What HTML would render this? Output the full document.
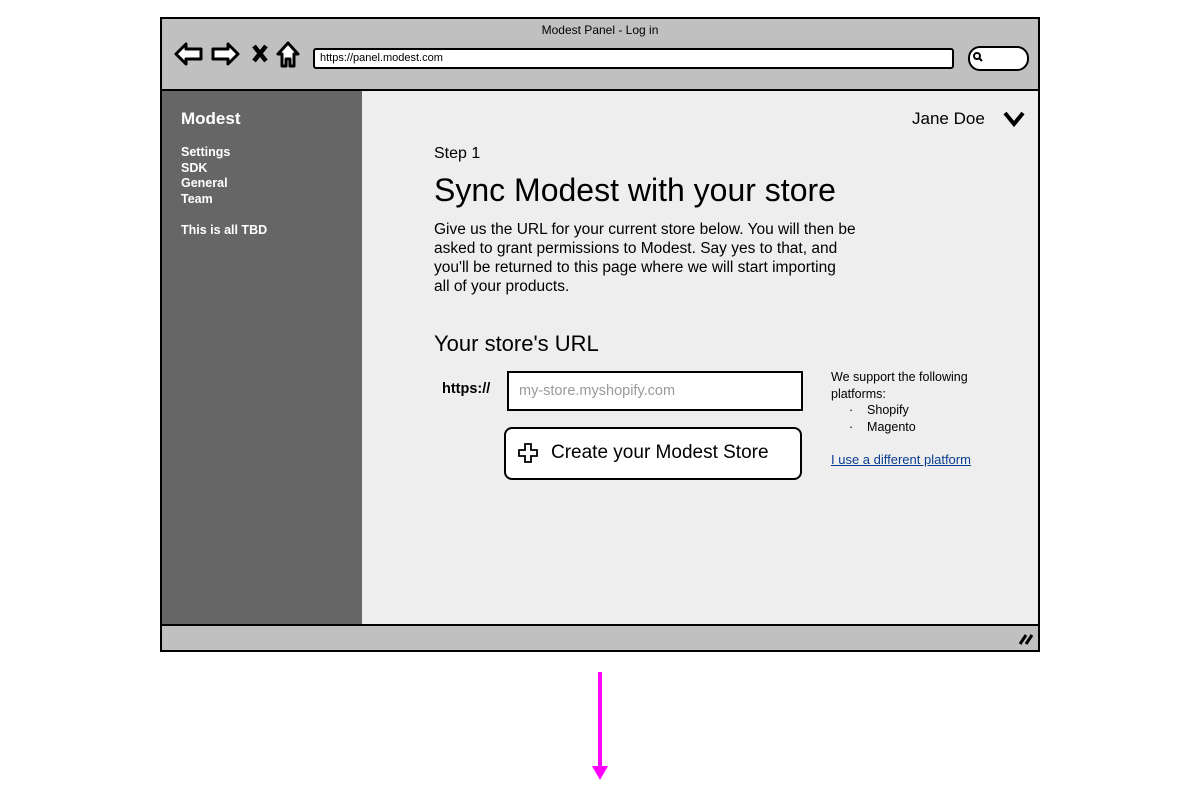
<!DOCTYPE html>
<html><head><meta charset="utf-8"><style>
body{margin:0;width:1200px;height:798px;background:#fff;position:relative;font-family:"Liberation Sans",sans-serif;overflow:hidden}
.a{position:absolute}
</style></head><body>
<div class="a" style="left:160px;top:17px;width:876px;height:631px;border:2px solid #000;background:#c0c0c0"></div>
<div class="a" style="left:162px;top:89px;width:876px;height:2px;background:#000"></div>
<div class="a" style="left:162px;top:91px;width:200px;height:534px;background:#666"></div>
<div class="a" style="left:362px;top:91px;width:676px;height:534px;background:#eee"></div>
<div class="a" style="left:162px;top:624px;width:876px;height:2px;background:#000"></div>
<div class="a" style="left:0;top:23px;width:1200px;text-align:center;font-size:12px">Modest Panel - Log in</div>
<svg class="a" style="left:170px;top:38px" width="140" height="32" viewBox="0 0 140 32">
<path d="M6 16 L16 6 V11 H31 V21 H16 V26 Z" fill="#fff" stroke="#000" stroke-width="3" stroke-linejoin="round"/>
<path d="M68 16 L58 6 V11 H43 V21 H58 V26 Z" fill="#fff" stroke="#000" stroke-width="3" stroke-linejoin="round"/>
<path d="M84 8 L96 23 M96 8 L84 23" stroke="#000" stroke-width="4.5"/>
<path d="M118 5 L108 16 H112 V28 H116 V21 H120 V28 H124 V16 H128 Z" fill="#fff" stroke="#000" stroke-width="3" stroke-linejoin="round"/>
</svg>
<div class="a" style="left:313px;top:48px;width:632px;height:17px;border:2px solid #000;border-radius:3px;background:#fff;font-size:11px;line-height:17px;padding-left:5px">https://panel.modest.com</div>
<div class="a" style="left:968px;top:46px;width:57px;height:21px;border:2px solid #000;border-radius:12px;background:#fff"></div>
<svg class="a" style="left:972px;top:51px" width="12" height="12"><circle cx="5" cy="5" r="3" fill="none" stroke="#000" stroke-width="2"/><path d="M7 7 L10 10" stroke="#000" stroke-width="2"/></svg>
<div class="a" style="left:181px;top:109px;color:#fff;font-size:17px;font-weight:bold">Modest</div>
<div class="a" style="left:181px;top:145px;color:#fff;font-size:12.5px;font-weight:bold;line-height:15.6px">Settings<br>SDK<br>General<br>Team</div>
<div class="a" style="left:181px;top:223px;color:#fff;font-size:12.5px;font-weight:bold">This is all TBD</div>
<div class="a" style="left:912px;top:109px;font-size:17px">Jane Doe</div>
<svg class="a" style="left:1002px;top:110px" width="24" height="18"><path d="M3 3 L12 14 L21 3" fill="none" stroke="#000" stroke-width="4"/></svg>
<div class="a" style="left:434px;top:145px;font-size:16px">Step 1</div>
<div class="a" style="left:434px;top:172px;font-size:32px">Sync Modest with your store</div>
<div class="a" style="left:434px;top:220px;font-size:15.5px;line-height:19px;white-space:nowrap">Give us the URL for your current store below. You will then be<br>asked to grant permissions to Modest. Say yes to that, and<br>you'll be returned to this page where we will start importing<br>all of your products.</div>
<div class="a" style="left:434px;top:331px;font-size:22px">Your store's URL</div>
<div class="a" style="left:442px;top:381px;font-size:14.5px;font-weight:bold">https://</div>
<div class="a" style="left:507px;top:371px;height:36px;border:2px solid #000;background:#fff;font-size:14.5px;color:#999;line-height:36px;padding-left:10px;width:282px">my-store.myshopify.com</div>
<div class="a" style="left:504px;top:427px;width:294px;height:49px;border:2px solid #000;border-radius:8px;background:#fff"></div>
<svg class="a" style="left:517px;top:442px" width="22" height="22"><path d="M8 2 H14 V8 H20 V14 H14 V20 H8 V14 H2 V8 H8 Z" fill="#fff" stroke="#000" stroke-width="1.8"/></svg>
<div class="a" style="left:551px;top:442px;font-size:19px">Create your Modest Store</div>
<div class="a" style="left:831px;top:369px;font-size:12.5px;line-height:16.5px">We support the following<br>platforms:</div>
<div class="a" style="left:849px;top:402px;font-size:12.5px;line-height:17px">·&nbsp;&nbsp;&nbsp;&nbsp;Shopify<br>·&nbsp;&nbsp;&nbsp;&nbsp;Magento</div>
<div class="a" style="left:831px;top:452px;font-size:13px;color:#0a3d91;text-decoration:underline">I use a different platform</div>
<svg class="a" style="left:1016px;top:630px" width="20" height="18"><path d="M4 14 L10 5 M10 14 L16 5" stroke="#000" stroke-width="3"/></svg>
<div class="a" style="left:598px;top:672px;width:4px;height:100px;background:#f0f"></div>
<svg class="a" style="left:591px;top:764px" width="18" height="18"><path d="M1 2 L9 16 L17 2 Z" fill="#f0f"/></svg>
</body></html>
